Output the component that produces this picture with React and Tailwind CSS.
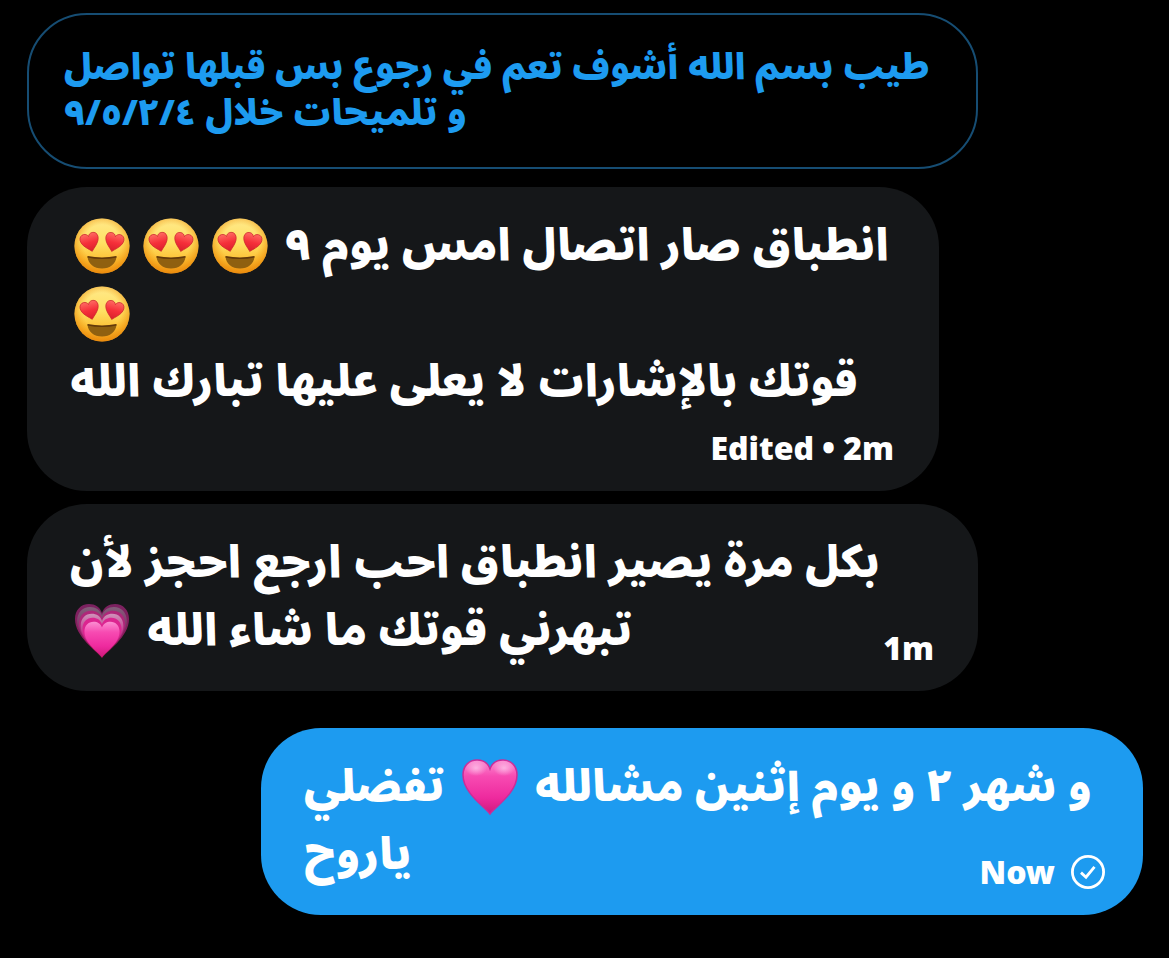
const HEART = 'M28 55 C23 48 1 34 1 16 C1 7 7 1 15 1 C21 1 26 4 28 10 C30 4 35 1 41 1 C49 1 55 7 55 16 C55 34 33 48 28 55 Z';

const Gradients = () => (
  <svg className="absolute size-0" aria-hidden="true">
    <defs>
      <linearGradient id="face" x1="0" y1="0" x2="0" y2="1">
        <stop offset="0" stopColor="#ffe98a" />
        <stop offset="0.45" stopColor="#ffe063" />
        <stop offset="0.75" stopColor="#fdc136" />
        <stop offset="1" stopColor="#f09a18" />
      </linearGradient>
      <radialGradient id="faceEdge" cx="0.5" cy="0.45" r="0.56">
        <stop offset="0.6" stopColor="#f39a0c" stopOpacity="0" />
        <stop offset="1" stopColor="#e8850a" stopOpacity="0.8" />
      </radialGradient>
      <linearGradient id="eye" x1="0" y1="0" x2="0" y2="1">
        <stop offset="0" stopColor="#ff6b62" />
        <stop offset="0.5" stopColor="#f5303a" />
        <stop offset="1" stopColor="#d91f2b" />
      </linearGradient>
      <linearGradient id="pink" x1="0" y1="0" x2="0" y2="1">
        <stop offset="0" stopColor="#fb8fd2" />
        <stop offset="0.3" stopColor="#f74bb2" />
        <stop offset="0.7" stopColor="#ee2a9e" />
        <stop offset="1" stopColor="#cf1a7c" />
      </linearGradient>
      <linearGradient id="ringOuter" x1="0" y1="0" x2="0" y2="1">
        <stop offset="0" stopColor="#7a2260" />
        <stop offset="0.6" stopColor="#8a1b5c" />
        <stop offset="1" stopColor="#c4155f" />
      </linearGradient>
      <linearGradient id="ringGray" x1="0" y1="0" x2="0" y2="1">
        <stop offset="0" stopColor="#80607a" />
        <stop offset="0.5" stopColor="#8b2468" />
        <stop offset="1" stopColor="#c81a6c" />
      </linearGradient>
      <linearGradient id="ringLight" x1="0" y1="0" x2="0" y2="1">
        <stop offset="0" stopColor="#cf93ba" />
        <stop offset="0.5" stopColor="#c02a86" />
        <stop offset="1" stopColor="#cf1a72" />
      </linearGradient>
      <radialGradient id="shine">
        <stop offset="0" stopColor="#ffd0f0" stopOpacity="0.7" />
        <stop offset="1" stopColor="#ffd0f0" stopOpacity="0" />
      </radialGradient>
    </defs>
  </svg>
);

const HeartEyes = () => (
  <svg viewBox="0 0 56 56" className="size-14 shrink-0 last:ml-1" role="img" aria-label="😍">
    <circle cx="28" cy="28" r="27.5" fill="url(#face)" />
    <circle cx="28" cy="28" r="27.5" fill="url(#faceEdge)" />
    <g stroke="#c9242b" strokeWidth="2">
      <path d={HEART} fill="url(#eye)" transform="translate(4.5 17.5) rotate(-14) scale(0.34)" />
      <path d={HEART} fill="url(#eye)" transform="translate(33 13) rotate(14) scale(0.34)" />
    </g>
    <path d="M13.5 38.5 Q28 41.5 42.5 38.5 C42 46 36 50.5 28 50.5 C20 50.5 14 46 13.5 38.5 Z" fill="#8f6010" />
    <path d="M13.5 38.7 Q28 41.7 42.5 38.7" fill="none" stroke="#63390a" strokeWidth="1.4" />
  </svg>
);

const PinkHeart = () => (
  <svg viewBox="0 0 56 56" className="size-14 shrink-0" role="img" aria-label="🩷">
    <path d={HEART} fill="url(#pink)" stroke="#cb2c98" strokeWidth="1.5" />
    <ellipse cx="14" cy="9" rx="11" ry="8" fill="url(#shine)" />
    <ellipse cx="42" cy="9" rx="11" ry="8" fill="url(#shine)" />
  </svg>
);

const GrowingHeart = () => (
  <svg viewBox="0 0 56 56" className="size-14 shrink-0 last:ml-1" role="img" aria-label="💗">
    <path d={HEART} fill="url(#ringOuter)" />
    <path d={HEART} fill="url(#ringGray)" transform="translate(2.2 3) scale(0.92)" />
    <path d={HEART} fill="#b0277a" transform="translate(4.2 7) scale(0.85)" />
    <path d={HEART} fill="url(#ringLight)" transform="translate(5.9 10) scale(0.79)" />
    <path d={HEART} fill="#dc2590" transform="translate(7.8 14) scale(0.72)" />
    <path d={HEART} fill="url(#pink)" transform="translate(9.8 18) scale(0.65)" />
  </svg>
);

const SentIcon = () => (
  <svg viewBox="0 0 34 34" className="size-[34px]" fill="none" stroke="#fff" aria-hidden="true">
    <circle cx="17" cy="17" r="15.6" strokeWidth="2.8" />
    <path d="M10 17.6 L15 22.2 L23.5 11.8" strokeWidth="2.8" />
  </svg>
);

const Line = ({ children }) => (
  <div dir="rtl" className="flex h-[68px] items-center justify-end gap-[13px] whitespace-nowrap">
    {children}
  </div>
);

const Meta = ({ children }) => (
  <div className="flex items-center justify-end gap-4 font-['Noto_Sans','Open_Sans',sans-serif] text-[32px] leading-[34px] font-black whitespace-nowrap">
    {children}
  </div>
);

const Bubble = ({ className, children }) => (
  <div className={`w-full rounded-[60px] pt-[25px] text-[44px] leading-[66px] font-black text-white ${className}`}>
    {children}
  </div>
);

const App = () => {
  return (
    <main className="flex min-h-screen flex-col bg-black pt-[13px] pr-[26px] pb-10 pl-[27px] font-['Noto_Sans_Arabic','DejaVu_Sans',sans-serif]">
      <Gradients />

      <blockquote
        dir="rtl"
        className="mb-[18px] w-full max-w-[951px] rounded-[60px] border-2 border-[#164d73] px-[35px] pt-[30px] pb-[30px] text-left text-[36px] leading-[46px] font-black whitespace-nowrap text-[#1d9bf0]"
      >
        <p>طيب بسم الله أشوف تعم في رجوع بس قبلها تواصل</p>
        <p>و تلميحات خلال ٩/٥/٢/٤</p>
      </blockquote>

      <Bubble className="mb-[13px] max-w-[912px] bg-[#151719] pr-[45px] pb-[19px] pl-[43px]">
        <Line>
          <span className="ml-1">انطباق صار اتصال امس يوم ٩</span>
          <HeartEyes />
          <HeartEyes />
          <HeartEyes />
        </Line>
        <Line>
          <HeartEyes />
        </Line>
        <Line>
          <span>قوتك بالإشارات لا يعلى عليها تبارك الله</span>
        </Line>
        <div className="mt-2 py-[7px]">
          <Meta>Edited • 2m</Meta>
        </div>
      </Bubble>

      <Bubble className="mb-[37px] max-w-[951px] bg-[#151719] pr-[44px] pb-[26px] pl-[43px]">
        <Line>
          <span>بكل مرة يصير انطباق احب ارجع احجز لأن</span>
        </Line>
        <div className="flex items-end justify-between">
          <Line>
            <span className="ml-1">تبهرني قوتك ما شاء الله</span>
            <GrowingHeart />
          </Line>
          <Meta>1m</Meta>
        </div>
      </Bubble>

      <Bubble className="max-w-[882px] self-end bg-[#1d9bf0] pr-[38px] pb-[26px] pl-[43px]">
        <Line>
          <span className="ml-1">و شهر ٢ و يوم إثنين مشالله</span>
          <PinkHeart />
          <span className="mr-1">تفضلي</span>
        </Line>
        <div className="flex items-end justify-between">
          <Line>
            <span>ياروح</span>
          </Line>
          <Meta>
            <span>Now</span>
            <SentIcon />
          </Meta>
        </div>
      </Bubble>
    </main>
  );
};

export default App;
